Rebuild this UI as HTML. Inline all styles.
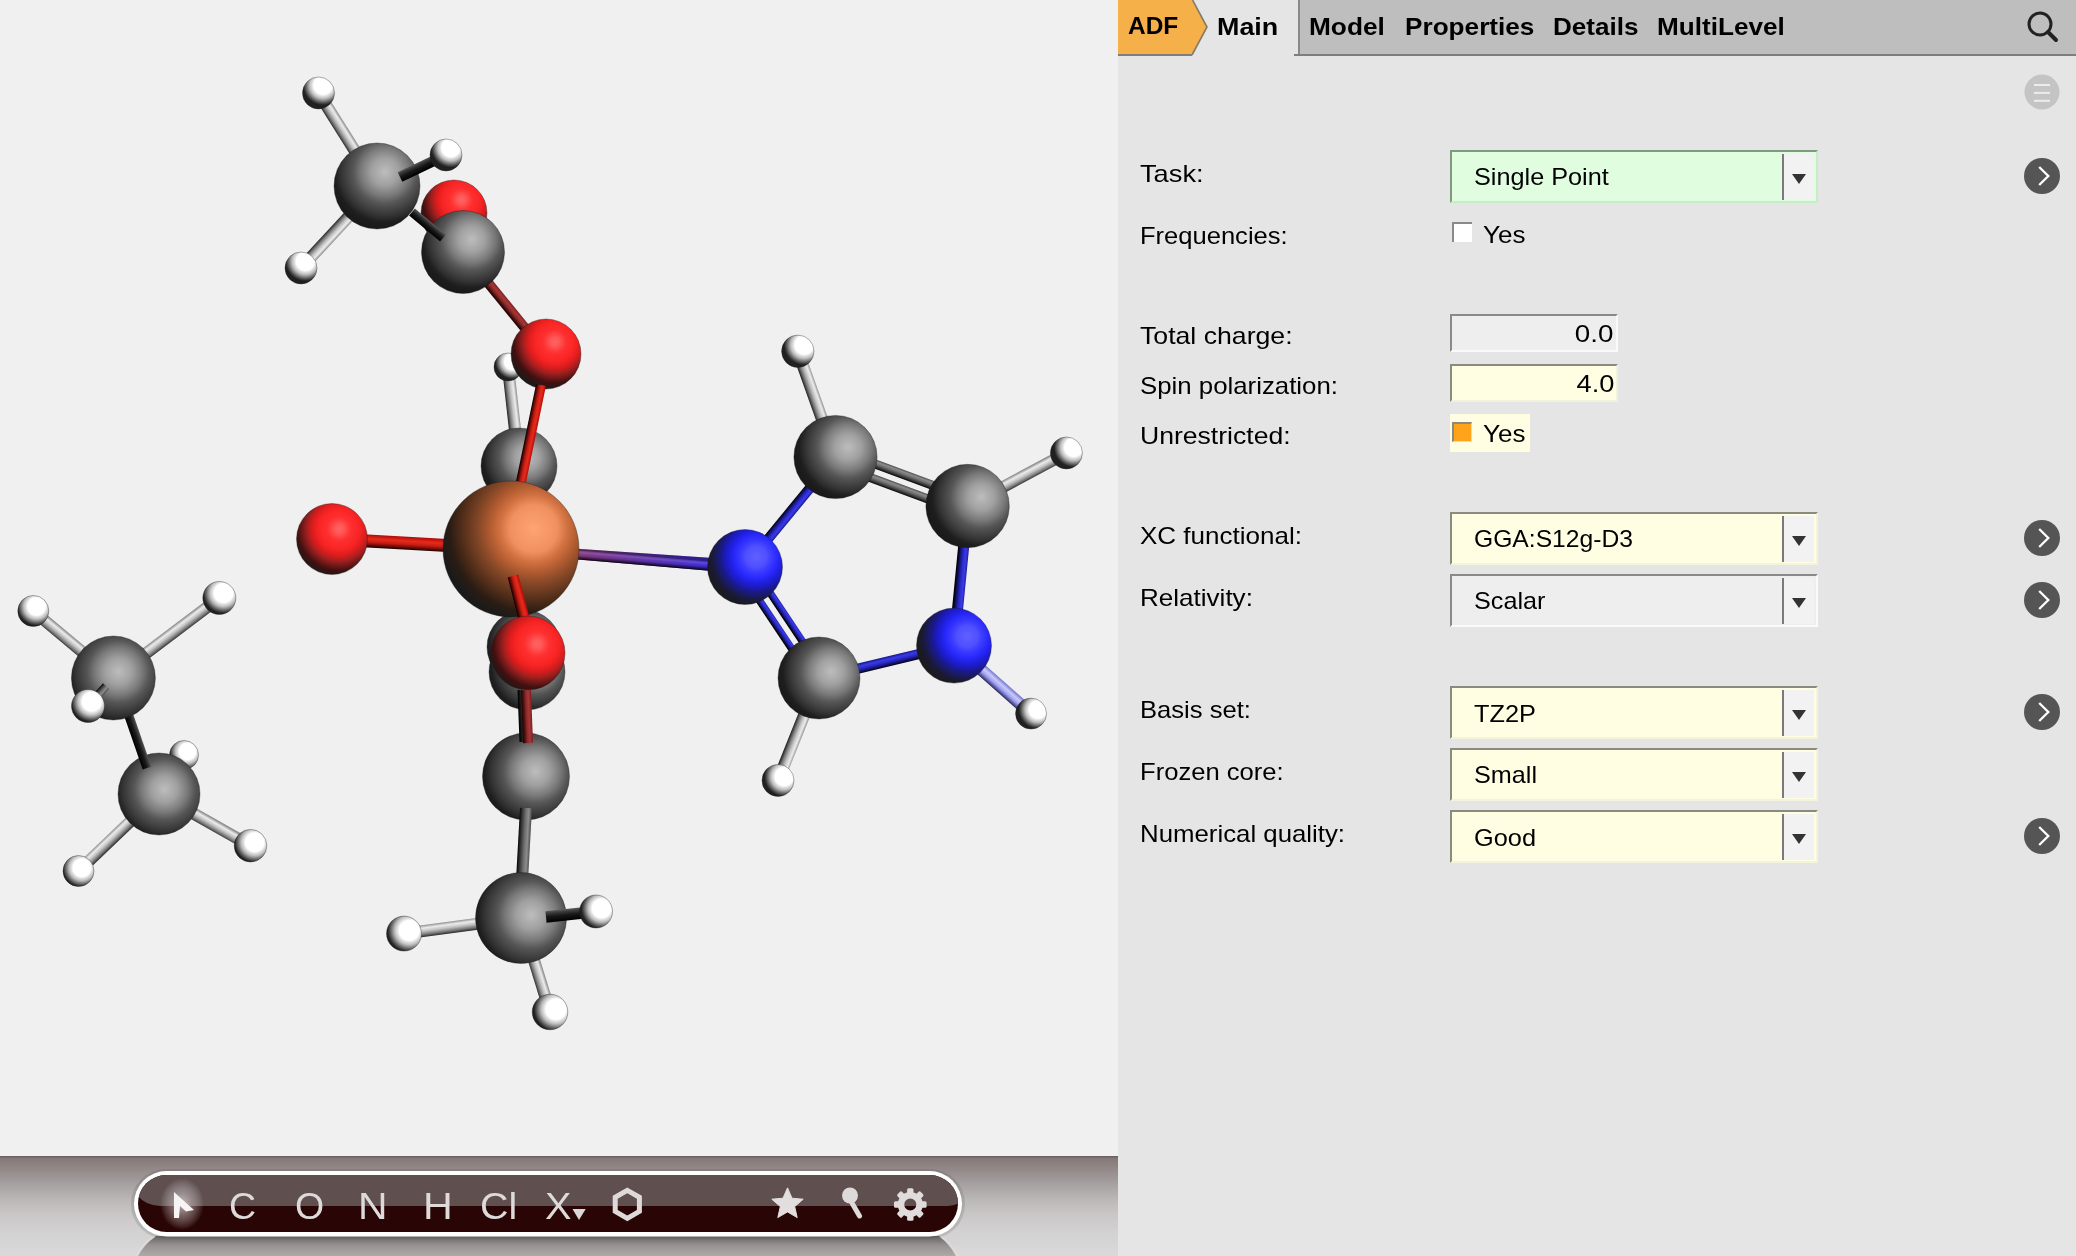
<!DOCTYPE html>
<html><head><meta charset="utf-8">
<style>
*{margin:0;padding:0;box-sizing:border-box}
html,body{width:2076px;height:1256px;overflow:hidden;background:#f0f0f0;font-family:"Liberation Sans",sans-serif}
.tab,.lbl,.lblr,.tbl,.dd div{will-change:transform}
.abs{position:absolute}
#panel{position:absolute;left:1118px;top:0;width:958px;height:1256px;background:#e5e5e5}
#tabbar{position:absolute;left:180px;top:0;width:778px;height:56px;background:#bebebe;border-left:2px solid #8a8a8a;border-bottom:2px solid #7e7e7e}
.tab{position:absolute;font-weight:bold;font-size:24px;line-height:54px;color:#000;white-space:nowrap;transform-origin:0 0}
.lbl{position:absolute;font-size:24px;line-height:28px;color:#000;white-space:nowrap;transform-origin:0 0}
.lblr{position:absolute;font-size:24px;line-height:28px;color:#000;white-space:nowrap;transform-origin:100% 0}
.dd{position:absolute;left:332px;width:368px;height:53px;border-top:2px solid #8a8a7e;border-left:2px solid #8a8a7e;border-right:2px solid #f4f4de;border-bottom:2px solid #f4f4de;background:#fffee3}
.dd .sep{position:absolute;left:330px;top:2px;width:2px;height:46px;background:#7a7a7a}
.dd .ar{position:absolute;left:332px;top:2px;width:30px;height:46px;background:#f2f2f2}
.dd .ar:after{content:"";position:absolute;left:8px;top:20px;border-left:7px solid transparent;border-right:7px solid transparent;border-top:10px solid #333}
.go{position:absolute;left:906px;width:36px;height:36px;border-radius:50%;background:#555}
.go svg{position:absolute;left:0;top:0}
.tbl{position:absolute;top:1185.5px;font-size:37.5px;line-height:40px;color:#dedada;white-space:nowrap;transform-origin:0 0}
</style></head><body>
<svg class="abs" style="left:0;top:0" width="1118" height="1156"><defs><linearGradient id="b1" gradientUnits="userSpaceOnUse" x1="163.2" y1="796.7" x2="154.8" y2="791.3"><stop offset="0" stop-color="#8a8a8a"/><stop offset="0.25" stop-color="#ececec"/><stop offset="0.5" stop-color="#c4c4c4"/><stop offset="0.78" stop-color="#7a7a7a"/><stop offset="1" stop-color="#2a2a2a"/></linearGradient><radialGradient id="s1" cx="0.622" cy="0.376" r="0.62" fx="0.622" fy="0.376"><stop offset="0" stop-color="#ffffff"/><stop offset="0.46" stop-color="#ffffff"/><stop offset="0.55" stop-color="#e0e0e0"/><stop offset="0.66" stop-color="#c0c0c0"/><stop offset="0.76" stop-color="#909090"/><stop offset="0.856" stop-color="#606060"/><stop offset="0.958" stop-color="#303030"/><stop offset="1" stop-color="#202020"/></radialGradient><linearGradient id="b2" gradientUnits="userSpaceOnUse" x1="117.2" y1="673.4" x2="109.6" y2="682.6"><stop offset="0" stop-color="#8a8a8a"/><stop offset="0.25" stop-color="#ececec"/><stop offset="0.5" stop-color="#c4c4c4"/><stop offset="0.78" stop-color="#7a7a7a"/><stop offset="1" stop-color="#2a2a2a"/></linearGradient><linearGradient id="b3" gradientUnits="userSpaceOnUse" x1="109.8" y1="673.2" x2="117.0" y2="682.8"><stop offset="0" stop-color="#8a8a8a"/><stop offset="0.25" stop-color="#ececec"/><stop offset="0.5" stop-color="#c4c4c4"/><stop offset="0.78" stop-color="#7a7a7a"/><stop offset="1" stop-color="#2a2a2a"/></linearGradient><linearGradient id="b4" gradientUnits="userSpaceOnUse" x1="154.9" y1="789.7" x2="163.1" y2="798.3"><stop offset="0" stop-color="#8a8a8a"/><stop offset="0.25" stop-color="#ececec"/><stop offset="0.5" stop-color="#c4c4c4"/><stop offset="0.78" stop-color="#7a7a7a"/><stop offset="1" stop-color="#2a2a2a"/></linearGradient><linearGradient id="b5" gradientUnits="userSpaceOnUse" x1="162.0" y1="788.8" x2="156.0" y2="799.2"><stop offset="0" stop-color="#8a8a8a"/><stop offset="0.25" stop-color="#ececec"/><stop offset="0.5" stop-color="#c4c4c4"/><stop offset="0.78" stop-color="#7a7a7a"/><stop offset="1" stop-color="#2a2a2a"/></linearGradient><radialGradient id="s2" cx="0.604" cy="0.351" r="0.62" fx="0.604" fy="0.351"><stop offset="0" stop-color="#ffffff"/><stop offset="0.46" stop-color="#ffffff"/><stop offset="0.55" stop-color="#e0e0e0"/><stop offset="0.66" stop-color="#c0c0c0"/><stop offset="0.76" stop-color="#909090"/><stop offset="0.856" stop-color="#606060"/><stop offset="0.958" stop-color="#303030"/><stop offset="1" stop-color="#202020"/></radialGradient><radialGradient id="s3" cx="0.626" cy="0.349" r="0.62" fx="0.626" fy="0.349"><stop offset="0" stop-color="#ffffff"/><stop offset="0.46" stop-color="#ffffff"/><stop offset="0.55" stop-color="#e0e0e0"/><stop offset="0.66" stop-color="#c0c0c0"/><stop offset="0.76" stop-color="#909090"/><stop offset="0.856" stop-color="#606060"/><stop offset="0.958" stop-color="#303030"/><stop offset="1" stop-color="#202020"/></radialGradient><radialGradient id="s4" cx="0.609" cy="0.397" r="0.62" fx="0.609" fy="0.397"><stop offset="0" stop-color="#ffffff"/><stop offset="0.46" stop-color="#ffffff"/><stop offset="0.55" stop-color="#e0e0e0"/><stop offset="0.66" stop-color="#c0c0c0"/><stop offset="0.76" stop-color="#909090"/><stop offset="0.856" stop-color="#606060"/><stop offset="0.958" stop-color="#303030"/><stop offset="1" stop-color="#202020"/></radialGradient><radialGradient id="s5" cx="0.630" cy="0.393" r="0.62" fx="0.630" fy="0.393"><stop offset="0" stop-color="#ffffff"/><stop offset="0.46" stop-color="#ffffff"/><stop offset="0.55" stop-color="#e0e0e0"/><stop offset="0.66" stop-color="#c0c0c0"/><stop offset="0.76" stop-color="#909090"/><stop offset="0.856" stop-color="#606060"/><stop offset="0.958" stop-color="#303030"/><stop offset="1" stop-color="#202020"/></radialGradient><radialGradient id="s6" cx="0.567" cy="0.443" r="0.65" fx="0.567" fy="0.443"><stop offset="0" stop-color="#bdbdbd"/><stop offset="0.246" stop-color="#a0a0a0"/><stop offset="0.43" stop-color="#7a7a7a"/><stop offset="0.57" stop-color="#565656"/><stop offset="0.79" stop-color="#333333"/><stop offset="0.9" stop-color="#1e1e1e"/><stop offset="1" stop-color="#1a1a1a"/></radialGradient><linearGradient id="b6" gradientUnits="userSpaceOnUse" x1="133.3" y1="714.5" x2="124.7" y2="717.5"><stop offset="0" stop-color="#5a5a5a"/><stop offset="0.2" stop-color="#3a3a3a"/><stop offset="0.5" stop-color="#181818"/><stop offset="1" stop-color="#000000"/></linearGradient><radialGradient id="s7" cx="0.561" cy="0.423" r="0.65" fx="0.561" fy="0.423"><stop offset="0" stop-color="#bdbdbd"/><stop offset="0.246" stop-color="#a0a0a0"/><stop offset="0.43" stop-color="#7a7a7a"/><stop offset="0.57" stop-color="#565656"/><stop offset="0.79" stop-color="#333333"/><stop offset="0.9" stop-color="#1e1e1e"/><stop offset="1" stop-color="#1a1a1a"/></radialGradient><linearGradient id="b7" gradientUnits="userSpaceOnUse" x1="91.0" y1="708.7" x2="85.0" y2="703.3"><stop offset="0" stop-color="#4a4a4a"/><stop offset="0.25" stop-color="#8c8c8c"/><stop offset="0.5" stop-color="#6e6e6e"/><stop offset="0.78" stop-color="#383838"/><stop offset="1" stop-color="#0a0a0a"/></linearGradient><radialGradient id="s8" cx="0.610" cy="0.368" r="0.62" fx="0.610" fy="0.368"><stop offset="0" stop-color="#ffffff"/><stop offset="0.46" stop-color="#ffffff"/><stop offset="0.55" stop-color="#e0e0e0"/><stop offset="0.66" stop-color="#c0c0c0"/><stop offset="0.76" stop-color="#909090"/><stop offset="0.856" stop-color="#606060"/><stop offset="0.958" stop-color="#303030"/><stop offset="1" stop-color="#202020"/></radialGradient><linearGradient id="b8" gradientUnits="userSpaceOnUse" x1="323.6" y1="89.8" x2="313.4" y2="96.2"><stop offset="0" stop-color="#8a8a8a"/><stop offset="0.25" stop-color="#ececec"/><stop offset="0.5" stop-color="#c4c4c4"/><stop offset="0.78" stop-color="#7a7a7a"/><stop offset="1" stop-color="#2a2a2a"/></linearGradient><linearGradient id="b9" gradientUnits="userSpaceOnUse" x1="305.4" y1="272.1" x2="296.6" y2="263.9"><stop offset="0" stop-color="#8a8a8a"/><stop offset="0.25" stop-color="#ececec"/><stop offset="0.5" stop-color="#c4c4c4"/><stop offset="0.78" stop-color="#7a7a7a"/><stop offset="1" stop-color="#2a2a2a"/></linearGradient><radialGradient id="s9" cx="0.638" cy="0.259" r="0.62" fx="0.638" fy="0.259"><stop offset="0" stop-color="#ffffff"/><stop offset="0.46" stop-color="#ffffff"/><stop offset="0.55" stop-color="#e0e0e0"/><stop offset="0.66" stop-color="#c0c0c0"/><stop offset="0.76" stop-color="#909090"/><stop offset="0.856" stop-color="#606060"/><stop offset="0.958" stop-color="#303030"/><stop offset="1" stop-color="#202020"/></radialGradient><radialGradient id="s10" cx="0.636" cy="0.290" r="0.62" fx="0.636" fy="0.290"><stop offset="0" stop-color="#ffffff"/><stop offset="0.46" stop-color="#ffffff"/><stop offset="0.55" stop-color="#e0e0e0"/><stop offset="0.66" stop-color="#c0c0c0"/><stop offset="0.76" stop-color="#909090"/><stop offset="0.856" stop-color="#606060"/><stop offset="0.958" stop-color="#303030"/><stop offset="1" stop-color="#202020"/></radialGradient><radialGradient id="s11" cx="0.614" cy="0.300" r="0.7" fx="0.614" fy="0.300"><stop offset="0" stop-color="#ff6262"/><stop offset="0.08" stop-color="#ff5a5a"/><stop offset="0.235" stop-color="#ff3030"/><stop offset="0.42" stop-color="#f82424"/><stop offset="0.55" stop-color="#d81c1c"/><stop offset="0.65" stop-color="#a02020"/><stop offset="0.84" stop-color="#401010"/><stop offset="1" stop-color="#1a1a1a"/></radialGradient><radialGradient id="s12" cx="0.593" cy="0.335" r="0.65" fx="0.593" fy="0.335"><stop offset="0" stop-color="#bdbdbd"/><stop offset="0.246" stop-color="#a0a0a0"/><stop offset="0.43" stop-color="#7a7a7a"/><stop offset="0.57" stop-color="#565656"/><stop offset="0.79" stop-color="#333333"/><stop offset="0.9" stop-color="#1e1e1e"/><stop offset="1" stop-color="#1a1a1a"/></radialGradient><linearGradient id="b10" gradientUnits="userSpaceOnUse" x1="397.7" y1="172.3" x2="402.3" y2="181.7"><stop offset="0" stop-color="#5a5a5a"/><stop offset="0.2" stop-color="#3a3a3a"/><stop offset="0.5" stop-color="#181818"/><stop offset="1" stop-color="#000000"/></linearGradient><radialGradient id="s13" cx="0.653" cy="0.270" r="0.62" fx="0.653" fy="0.270"><stop offset="0" stop-color="#ffffff"/><stop offset="0.46" stop-color="#ffffff"/><stop offset="0.55" stop-color="#e0e0e0"/><stop offset="0.66" stop-color="#c0c0c0"/><stop offset="0.76" stop-color="#909090"/><stop offset="0.856" stop-color="#606060"/><stop offset="0.958" stop-color="#303030"/><stop offset="1" stop-color="#202020"/></radialGradient><linearGradient id="b11" gradientUnits="userSpaceOnUse" x1="466.9" y1="248.8" x2="459.1" y2="255.2"><stop offset="0" stop-color="#7a2020"/><stop offset="0.3" stop-color="#a83636"/><stop offset="0.55" stop-color="#8a2a2a"/><stop offset="0.8" stop-color="#4a1010"/><stop offset="1" stop-color="#200000"/></linearGradient><radialGradient id="s14" cx="0.604" cy="0.347" r="0.65" fx="0.604" fy="0.347"><stop offset="0" stop-color="#bdbdbd"/><stop offset="0.246" stop-color="#a0a0a0"/><stop offset="0.43" stop-color="#7a7a7a"/><stop offset="0.57" stop-color="#565656"/><stop offset="0.79" stop-color="#333333"/><stop offset="0.9" stop-color="#1e1e1e"/><stop offset="1" stop-color="#1a1a1a"/></radialGradient><linearGradient id="b12" gradientUnits="userSpaceOnUse" x1="414.9" y1="208.6" x2="409.1" y2="215.4"><stop offset="0" stop-color="#5a5a5a"/><stop offset="0.2" stop-color="#3a3a3a"/><stop offset="0.5" stop-color="#181818"/><stop offset="1" stop-color="#000000"/></linearGradient><linearGradient id="b13" gradientUnits="userSpaceOnUse" x1="514.0" y1="366.3" x2="502.0" y2="367.7"><stop offset="0" stop-color="#8a8a8a"/><stop offset="0.25" stop-color="#ececec"/><stop offset="0.5" stop-color="#c4c4c4"/><stop offset="0.78" stop-color="#7a7a7a"/><stop offset="1" stop-color="#2a2a2a"/></linearGradient><radialGradient id="s15" cx="0.661" cy="0.307" r="0.62" fx="0.661" fy="0.307"><stop offset="0" stop-color="#ffffff"/><stop offset="0.46" stop-color="#ffffff"/><stop offset="0.55" stop-color="#e0e0e0"/><stop offset="0.66" stop-color="#c0c0c0"/><stop offset="0.76" stop-color="#909090"/><stop offset="0.856" stop-color="#606060"/><stop offset="0.958" stop-color="#303030"/><stop offset="1" stop-color="#202020"/></radialGradient><radialGradient id="s16" cx="0.626" cy="0.325" r="0.7" fx="0.626" fy="0.325"><stop offset="0" stop-color="#ff6262"/><stop offset="0.08" stop-color="#ff5a5a"/><stop offset="0.235" stop-color="#ff3030"/><stop offset="0.42" stop-color="#f82424"/><stop offset="0.55" stop-color="#d81c1c"/><stop offset="0.65" stop-color="#a02020"/><stop offset="0.84" stop-color="#401010"/><stop offset="1" stop-color="#1a1a1a"/></radialGradient><radialGradient id="s17" cx="0.610" cy="0.385" r="0.65" fx="0.610" fy="0.385"><stop offset="0" stop-color="#bdbdbd"/><stop offset="0.246" stop-color="#a0a0a0"/><stop offset="0.43" stop-color="#7a7a7a"/><stop offset="0.57" stop-color="#565656"/><stop offset="0.79" stop-color="#333333"/><stop offset="0.9" stop-color="#1e1e1e"/><stop offset="1" stop-color="#1a1a1a"/></radialGradient><linearGradient id="b14" gradientUnits="userSpaceOnUse" x1="545.9" y1="386.0" x2="536.1" y2="384.0"><stop offset="0" stop-color="#b00c0c"/><stop offset="0.3" stop-color="#e82a1a"/><stop offset="0.55" stop-color="#c81e14"/><stop offset="0.8" stop-color="#6a0a06"/><stop offset="1" stop-color="#0a0000"/></linearGradient><radialGradient id="s18" cx="0.611" cy="0.417" r="0.65" fx="0.611" fy="0.417"><stop offset="0" stop-color="#bdbdbd"/><stop offset="0.246" stop-color="#a0a0a0"/><stop offset="0.43" stop-color="#7a7a7a"/><stop offset="0.57" stop-color="#565656"/><stop offset="0.79" stop-color="#333333"/><stop offset="0.9" stop-color="#1e1e1e"/><stop offset="1" stop-color="#1a1a1a"/></radialGradient><radialGradient id="s19" cx="0.611" cy="0.422" r="0.65" fx="0.611" fy="0.422"><stop offset="0" stop-color="#bdbdbd"/><stop offset="0.246" stop-color="#a0a0a0"/><stop offset="0.43" stop-color="#7a7a7a"/><stop offset="0.57" stop-color="#565656"/><stop offset="0.79" stop-color="#333333"/><stop offset="0.9" stop-color="#1e1e1e"/><stop offset="1" stop-color="#1a1a1a"/></radialGradient><linearGradient id="b15" gradientUnits="userSpaceOnUse" x1="332.4" y1="532.5" x2="331.6" y2="545.5"><stop offset="0" stop-color="#b00c0c"/><stop offset="0.3" stop-color="#e82a1a"/><stop offset="0.55" stop-color="#c81e14"/><stop offset="0.8" stop-color="#6a0a06"/><stop offset="1" stop-color="#0a0000"/></linearGradient><radialGradient id="s20" cx="0.600" cy="0.358" r="0.7" fx="0.600" fy="0.358"><stop offset="0" stop-color="#ff6262"/><stop offset="0.08" stop-color="#ff5a5a"/><stop offset="0.235" stop-color="#ff3030"/><stop offset="0.42" stop-color="#f82424"/><stop offset="0.55" stop-color="#d81c1c"/><stop offset="0.65" stop-color="#a02020"/><stop offset="0.84" stop-color="#401010"/><stop offset="1" stop-color="#1a1a1a"/></radialGradient><linearGradient id="b16" gradientUnits="userSpaceOnUse" x1="511.0" y1="549.0" x2="745.0" y2="567.0"><stop offset="0.25" stop-color="#8a3a7c"/><stop offset="0.9" stop-color="#3a2ce8"/></linearGradient><linearGradient id="b17" gradientUnits="userSpaceOnUse" x1="511.4" y1="544.3" x2="510.6" y2="553.7"><stop offset="0" stop-color="#000" stop-opacity="0.35"/><stop offset="0.3" stop-color="#fff" stop-opacity="0.12"/><stop offset="0.55" stop-color="#000" stop-opacity="0"/><stop offset="0.8" stop-color="#000" stop-opacity="0.5"/><stop offset="1" stop-color="#000" stop-opacity="0.92"/></linearGradient><radialGradient id="s21" cx="0.666" cy="0.350" r="0.75" fx="0.666" fy="0.350"><stop offset="0" stop-color="#ffa472"/><stop offset="0.233" stop-color="#f09060"/><stop offset="0.333" stop-color="#d07040"/><stop offset="0.433" stop-color="#b05a30"/><stop offset="0.527" stop-color="#8a4a28"/><stop offset="0.627" stop-color="#6a3a20"/><stop offset="0.727" stop-color="#4a2a18"/><stop offset="0.823" stop-color="#2a1c14"/><stop offset="0.93" stop-color="#1a1a1a"/><stop offset="1" stop-color="#1a1a1a"/></radialGradient><linearGradient id="b18" gradientUnits="userSpaceOnUse" x1="518.3" y1="574.6" x2="507.7" y2="577.4"><stop offset="0" stop-color="#b00c0c"/><stop offset="0.3" stop-color="#e82a1a"/><stop offset="0.55" stop-color="#c81e14"/><stop offset="0.8" stop-color="#6a0a06"/><stop offset="1" stop-color="#0a0000"/></linearGradient><radialGradient id="s22" cx="0.623" cy="0.378" r="0.7" fx="0.623" fy="0.378"><stop offset="0" stop-color="#ff6262"/><stop offset="0.08" stop-color="#ff5a5a"/><stop offset="0.235" stop-color="#ff3030"/><stop offset="0.42" stop-color="#f82424"/><stop offset="0.55" stop-color="#d81c1c"/><stop offset="0.65" stop-color="#a02020"/><stop offset="0.84" stop-color="#401010"/><stop offset="1" stop-color="#1a1a1a"/></radialGradient><radialGradient id="s23" cx="0.611" cy="0.440" r="0.65" fx="0.611" fy="0.440"><stop offset="0" stop-color="#bdbdbd"/><stop offset="0.246" stop-color="#a0a0a0"/><stop offset="0.43" stop-color="#7a7a7a"/><stop offset="0.57" stop-color="#565656"/><stop offset="0.79" stop-color="#333333"/><stop offset="0.9" stop-color="#1e1e1e"/><stop offset="1" stop-color="#1a1a1a"/></radialGradient><linearGradient id="b19" gradientUnits="userSpaceOnUse" x1="522.5" y1="689.9" x2="517.5" y2="690.1"><stop offset="0" stop-color="#5a5a5a"/><stop offset="0.2" stop-color="#3a3a3a"/><stop offset="0.5" stop-color="#181818"/><stop offset="1" stop-color="#000000"/></linearGradient><linearGradient id="b20" gradientUnits="userSpaceOnUse" x1="531.0" y1="689.8" x2="521.0" y2="690.2"><stop offset="0" stop-color="#7a2020"/><stop offset="0.3" stop-color="#a83636"/><stop offset="0.55" stop-color="#8a2a2a"/><stop offset="0.8" stop-color="#4a1010"/><stop offset="1" stop-color="#200000"/></linearGradient><linearGradient id="b21" gradientUnits="userSpaceOnUse" x1="532.0" y1="808.3" x2="520.0" y2="807.7"><stop offset="0" stop-color="#4a4a4a"/><stop offset="0.25" stop-color="#8c8c8c"/><stop offset="0.5" stop-color="#6e6e6e"/><stop offset="0.78" stop-color="#383838"/><stop offset="1" stop-color="#0a0a0a"/></linearGradient><linearGradient id="b22" gradientUnits="userSpaceOnUse" x1="403.2" y1="927.7" x2="404.8" y2="939.5"><stop offset="0" stop-color="#8a8a8a"/><stop offset="0.25" stop-color="#ececec"/><stop offset="0.5" stop-color="#c4c4c4"/><stop offset="0.78" stop-color="#7a7a7a"/><stop offset="1" stop-color="#2a2a2a"/></linearGradient><linearGradient id="b23" gradientUnits="userSpaceOnUse" x1="555.7" y1="1010.2" x2="544.3" y2="1013.8"><stop offset="0" stop-color="#8a8a8a"/><stop offset="0.25" stop-color="#ececec"/><stop offset="0.5" stop-color="#c4c4c4"/><stop offset="0.78" stop-color="#7a7a7a"/><stop offset="1" stop-color="#2a2a2a"/></linearGradient><radialGradient id="s24" cx="0.648" cy="0.408" r="0.62" fx="0.648" fy="0.408"><stop offset="0" stop-color="#ffffff"/><stop offset="0.46" stop-color="#ffffff"/><stop offset="0.55" stop-color="#e0e0e0"/><stop offset="0.66" stop-color="#c0c0c0"/><stop offset="0.76" stop-color="#909090"/><stop offset="0.856" stop-color="#606060"/><stop offset="0.958" stop-color="#303030"/><stop offset="1" stop-color="#202020"/></radialGradient><radialGradient id="s25" cx="0.666" cy="0.422" r="0.62" fx="0.666" fy="0.422"><stop offset="0" stop-color="#ffffff"/><stop offset="0.46" stop-color="#ffffff"/><stop offset="0.55" stop-color="#e0e0e0"/><stop offset="0.66" stop-color="#c0c0c0"/><stop offset="0.76" stop-color="#909090"/><stop offset="0.856" stop-color="#606060"/><stop offset="0.958" stop-color="#303030"/><stop offset="1" stop-color="#202020"/></radialGradient><radialGradient id="s26" cx="0.611" cy="0.465" r="0.65" fx="0.611" fy="0.465"><stop offset="0" stop-color="#bdbdbd"/><stop offset="0.246" stop-color="#a0a0a0"/><stop offset="0.43" stop-color="#7a7a7a"/><stop offset="0.57" stop-color="#565656"/><stop offset="0.79" stop-color="#333333"/><stop offset="0.9" stop-color="#1e1e1e"/><stop offset="1" stop-color="#1a1a1a"/></radialGradient><linearGradient id="b24" gradientUnits="userSpaceOnUse" x1="545.4" y1="911.3" x2="546.6" y2="922.7"><stop offset="0" stop-color="#5a5a5a"/><stop offset="0.2" stop-color="#3a3a3a"/><stop offset="0.5" stop-color="#181818"/><stop offset="1" stop-color="#000000"/></linearGradient><radialGradient id="s27" cx="0.672" cy="0.404" r="0.62" fx="0.672" fy="0.404"><stop offset="0" stop-color="#ffffff"/><stop offset="0.46" stop-color="#ffffff"/><stop offset="0.55" stop-color="#e0e0e0"/><stop offset="0.66" stop-color="#c0c0c0"/><stop offset="0.76" stop-color="#909090"/><stop offset="0.856" stop-color="#606060"/><stop offset="0.958" stop-color="#303030"/><stop offset="1" stop-color="#202020"/></radialGradient><linearGradient id="b25" gradientUnits="userSpaceOnUse" x1="841.2" y1="455.0" x2="829.8" y2="459.0"><stop offset="0" stop-color="#8a8a8a"/><stop offset="0.25" stop-color="#ececec"/><stop offset="0.5" stop-color="#c4c4c4"/><stop offset="0.78" stop-color="#7a7a7a"/><stop offset="1" stop-color="#2a2a2a"/></linearGradient><linearGradient id="b26" gradientUnits="userSpaceOnUse" x1="964.8" y1="500.7" x2="970.4" y2="511.3"><stop offset="0" stop-color="#8a8a8a"/><stop offset="0.25" stop-color="#ececec"/><stop offset="0.5" stop-color="#c4c4c4"/><stop offset="0.78" stop-color="#7a7a7a"/><stop offset="1" stop-color="#2a2a2a"/></linearGradient><linearGradient id="b27" gradientUnits="userSpaceOnUse" x1="824.6" y1="680.2" x2="813.4" y2="675.8"><stop offset="0" stop-color="#8a8a8a"/><stop offset="0.25" stop-color="#ececec"/><stop offset="0.5" stop-color="#c4c4c4"/><stop offset="0.78" stop-color="#7a7a7a"/><stop offset="1" stop-color="#2a2a2a"/></linearGradient><linearGradient id="b28" gradientUnits="userSpaceOnUse" x1="958.0" y1="641.1" x2="950.0" y2="650.1"><stop offset="0" stop-color="#7a7ad0"/><stop offset="0.3" stop-color="#c8c8ff"/><stop offset="0.6" stop-color="#a0a0e8"/><stop offset="0.85" stop-color="#5050a0"/><stop offset="1" stop-color="#202040"/></linearGradient><radialGradient id="s28" cx="0.696" cy="0.305" r="0.62" fx="0.696" fy="0.305"><stop offset="0" stop-color="#ffffff"/><stop offset="0.46" stop-color="#ffffff"/><stop offset="0.55" stop-color="#e0e0e0"/><stop offset="0.66" stop-color="#c0c0c0"/><stop offset="0.76" stop-color="#909090"/><stop offset="0.856" stop-color="#606060"/><stop offset="0.958" stop-color="#303030"/><stop offset="1" stop-color="#202020"/></radialGradient><radialGradient id="s29" cx="0.728" cy="0.323" r="0.62" fx="0.728" fy="0.323"><stop offset="0" stop-color="#ffffff"/><stop offset="0.46" stop-color="#ffffff"/><stop offset="0.55" stop-color="#e0e0e0"/><stop offset="0.66" stop-color="#c0c0c0"/><stop offset="0.76" stop-color="#909090"/><stop offset="0.856" stop-color="#606060"/><stop offset="0.958" stop-color="#303030"/><stop offset="1" stop-color="#202020"/></radialGradient><radialGradient id="s30" cx="0.694" cy="0.381" r="0.62" fx="0.694" fy="0.381"><stop offset="0" stop-color="#ffffff"/><stop offset="0.46" stop-color="#ffffff"/><stop offset="0.55" stop-color="#e0e0e0"/><stop offset="0.66" stop-color="#c0c0c0"/><stop offset="0.76" stop-color="#909090"/><stop offset="0.856" stop-color="#606060"/><stop offset="0.958" stop-color="#303030"/><stop offset="1" stop-color="#202020"/></radialGradient><radialGradient id="s31" cx="0.724" cy="0.369" r="0.62" fx="0.724" fy="0.369"><stop offset="0" stop-color="#ffffff"/><stop offset="0.46" stop-color="#ffffff"/><stop offset="0.55" stop-color="#e0e0e0"/><stop offset="0.66" stop-color="#c0c0c0"/><stop offset="0.76" stop-color="#909090"/><stop offset="0.856" stop-color="#606060"/><stop offset="0.958" stop-color="#303030"/><stop offset="1" stop-color="#202020"/></radialGradient><linearGradient id="b29" gradientUnits="userSpaceOnUse" x1="748.9" y1="570.2" x2="741.1" y2="563.8"><stop offset="0" stop-color="#1a1a90"/><stop offset="0.25" stop-color="#3a3ae8"/><stop offset="0.5" stop-color="#2a2ac8"/><stop offset="0.8" stop-color="#101060"/><stop offset="1" stop-color="#000000"/></linearGradient><linearGradient id="b30" gradientUnits="userSpaceOnUse" x1="839.6" y1="446.0" x2="836.5" y2="454.4"><stop offset="0" stop-color="#4a4a4a"/><stop offset="0.25" stop-color="#8c8c8c"/><stop offset="0.5" stop-color="#6e6e6e"/><stop offset="0.78" stop-color="#383838"/><stop offset="1" stop-color="#0a0a0a"/></linearGradient><linearGradient id="b31" gradientUnits="userSpaceOnUse" x1="834.5" y1="459.6" x2="831.4" y2="468.0"><stop offset="0" stop-color="#4a4a4a"/><stop offset="0.25" stop-color="#8c8c8c"/><stop offset="0.5" stop-color="#6e6e6e"/><stop offset="0.78" stop-color="#383838"/><stop offset="1" stop-color="#0a0a0a"/></linearGradient><linearGradient id="b32" gradientUnits="userSpaceOnUse" x1="973.1" y1="506.5" x2="962.1" y2="505.5"><stop offset="0" stop-color="#1a1a90"/><stop offset="0.25" stop-color="#3a3ae8"/><stop offset="0.5" stop-color="#2a2ac8"/><stop offset="0.8" stop-color="#101060"/><stop offset="1" stop-color="#000000"/></linearGradient><linearGradient id="b33" gradientUnits="userSpaceOnUse" x1="952.8" y1="640.7" x2="955.2" y2="650.5"><stop offset="0" stop-color="#1a1a90"/><stop offset="0.25" stop-color="#3a3ae8"/><stop offset="0.5" stop-color="#2a2ac8"/><stop offset="0.8" stop-color="#101060"/><stop offset="1" stop-color="#000000"/></linearGradient><linearGradient id="b34" gradientUnits="userSpaceOnUse" x1="753.5" y1="561.3" x2="747.3" y2="565.5"><stop offset="0" stop-color="#1a1a90"/><stop offset="0.25" stop-color="#3a3ae8"/><stop offset="0.5" stop-color="#2a2ac8"/><stop offset="0.8" stop-color="#101060"/><stop offset="1" stop-color="#000000"/></linearGradient><linearGradient id="b35" gradientUnits="userSpaceOnUse" x1="742.7" y1="568.5" x2="736.5" y2="572.7"><stop offset="0" stop-color="#1a1a90"/><stop offset="0.25" stop-color="#3a3ae8"/><stop offset="0.5" stop-color="#2a2ac8"/><stop offset="0.8" stop-color="#101060"/><stop offset="1" stop-color="#000000"/></linearGradient><radialGradient id="s32" cx="0.649" cy="0.383" r="0.65" fx="0.649" fy="0.383"><stop offset="0" stop-color="#bdbdbd"/><stop offset="0.246" stop-color="#a0a0a0"/><stop offset="0.43" stop-color="#7a7a7a"/><stop offset="0.57" stop-color="#565656"/><stop offset="0.79" stop-color="#333333"/><stop offset="0.9" stop-color="#1e1e1e"/><stop offset="1" stop-color="#1a1a1a"/></radialGradient><radialGradient id="s33" cx="0.664" cy="0.392" r="0.65" fx="0.664" fy="0.392"><stop offset="0" stop-color="#bdbdbd"/><stop offset="0.246" stop-color="#a0a0a0"/><stop offset="0.43" stop-color="#7a7a7a"/><stop offset="0.57" stop-color="#565656"/><stop offset="0.79" stop-color="#333333"/><stop offset="0.9" stop-color="#1e1e1e"/><stop offset="1" stop-color="#1a1a1a"/></radialGradient><radialGradient id="s34" cx="0.675" cy="0.377" r="0.7" fx="0.675" fy="0.377"><stop offset="0" stop-color="#6060ff"/><stop offset="0.2" stop-color="#5050ff"/><stop offset="0.29" stop-color="#3c3cff"/><stop offset="0.4" stop-color="#2a2aff"/><stop offset="0.5" stop-color="#2020e0"/><stop offset="0.57" stop-color="#1c1cc8"/><stop offset="0.66" stop-color="#1a1a90"/><stop offset="0.86" stop-color="#1a1a30"/><stop offset="1" stop-color="#1a1a1a"/></radialGradient><radialGradient id="s35" cx="0.647" cy="0.423" r="0.65" fx="0.647" fy="0.423"><stop offset="0" stop-color="#bdbdbd"/><stop offset="0.246" stop-color="#a0a0a0"/><stop offset="0.43" stop-color="#7a7a7a"/><stop offset="0.57" stop-color="#565656"/><stop offset="0.79" stop-color="#333333"/><stop offset="0.9" stop-color="#1e1e1e"/><stop offset="1" stop-color="#1a1a1a"/></radialGradient><radialGradient id="s36" cx="0.650" cy="0.363" r="0.7" fx="0.650" fy="0.363"><stop offset="0" stop-color="#6060ff"/><stop offset="0.2" stop-color="#5050ff"/><stop offset="0.29" stop-color="#3c3cff"/><stop offset="0.4" stop-color="#2a2aff"/><stop offset="0.5" stop-color="#2020e0"/><stop offset="0.57" stop-color="#1c1cc8"/><stop offset="0.66" stop-color="#1a1a90"/><stop offset="0.86" stop-color="#1a1a30"/><stop offset="1" stop-color="#1a1a1a"/></radialGradient></defs><polygon points="163.2,796.7 188.2,757.7 179.8,752.3 154.8,791.3" fill="url(#b1)"/><circle cx="184" cy="755" r="14.5" fill="url(#s1)" stroke="#1a1a1a" stroke-opacity="0.45" stroke-width="0.8"/><polygon points="117.2,673.4 37.1,606.4 29.5,615.6 109.6,682.6" fill="url(#b2)"/><polygon points="109.8,673.2 215.7,593.2 222.9,602.8 117.0,682.8" fill="url(#b3)"/><polygon points="154.9,789.7 74.4,866.7 82.6,875.3 163.1,798.3" fill="url(#b4)"/><polygon points="162.0,788.8 253.5,840.5 247.5,850.9 156.0,799.2" fill="url(#b5)"/><circle cx="33.3" cy="611" r="15.5" fill="url(#s2)" stroke="#1a1a1a" stroke-opacity="0.45" stroke-width="0.8"/><circle cx="219.3" cy="598" r="16.5" fill="url(#s3)" stroke="#1a1a1a" stroke-opacity="0.45" stroke-width="0.8"/><circle cx="78.5" cy="871" r="15.5" fill="url(#s4)" stroke="#1a1a1a" stroke-opacity="0.45" stroke-width="0.8"/><circle cx="250.5" cy="845.7" r="16.3" fill="url(#s5)" stroke="#1a1a1a" stroke-opacity="0.45" stroke-width="0.8"/><circle cx="159" cy="794" r="41" fill="url(#s6)" stroke="#1a1a1a" stroke-opacity="0.45" stroke-width="0.8"/><polygon points="133.3,714.5 151.3,766.5 142.7,769.5 124.7,717.5" fill="url(#b6)"/><circle cx="113.4" cy="678" r="42" fill="url(#s7)" stroke="#1a1a1a" stroke-opacity="0.45" stroke-width="0.8"/><polygon points="91.0,708.7 109.0,688.7 103.0,683.3 85.0,703.3" fill="url(#b7)"/><circle cx="88" cy="706" r="16.5" fill="url(#s8)" stroke="#1a1a1a" stroke-opacity="0.45" stroke-width="0.8"/><polygon points="323.6,89.8 382.1,182.8 371.9,189.2 313.4,96.2" fill="url(#b8)"/><polygon points="305.4,272.1 381.4,190.1 372.6,181.9 296.6,263.9" fill="url(#b9)"/><circle cx="318.5" cy="93" r="16" fill="url(#s9)" stroke="#1a1a1a" stroke-opacity="0.45" stroke-width="0.8"/><circle cx="301" cy="268" r="16" fill="url(#s10)" stroke="#1a1a1a" stroke-opacity="0.45" stroke-width="0.8"/><circle cx="454" cy="213" r="33" fill="url(#s11)" stroke="#1a1a1a" stroke-opacity="0.45" stroke-width="0.8"/><circle cx="377" cy="186" r="43" fill="url(#s12)" stroke="#1a1a1a" stroke-opacity="0.45" stroke-width="0.8"/><polygon points="397.7,172.3 443.7,150.3 448.3,159.7 402.3,181.7" fill="url(#b10)"/><circle cx="446" cy="155" r="16" fill="url(#s13)" stroke="#1a1a1a" stroke-opacity="0.45" stroke-width="0.8"/><polygon points="466.9,248.8 549.9,350.8 542.1,357.2 459.1,255.2" fill="url(#b11)"/><circle cx="463" cy="252" r="41.5" fill="url(#s14)" stroke="#1a1a1a" stroke-opacity="0.45" stroke-width="0.8"/><polygon points="414.9,208.6 445.9,234.6 440.1,241.4 409.1,215.4" fill="url(#b12)"/><polygon points="514.0,366.3 525.0,465.3 513.0,466.7 502.0,367.7" fill="url(#b13)"/><circle cx="508" cy="367" r="14" fill="url(#s15)" stroke="#1a1a1a" stroke-opacity="0.45" stroke-width="0.8"/><circle cx="546" cy="354" r="35" fill="url(#s16)" stroke="#1a1a1a" stroke-opacity="0.45" stroke-width="0.8"/><circle cx="519" cy="466" r="38" fill="url(#s17)" stroke="#1a1a1a" stroke-opacity="0.45" stroke-width="0.8"/><polygon points="545.9,386.0 525.9,483.0 516.1,481.0 536.1,384.0" fill="url(#b14)"/><circle cx="524" cy="647" r="37" fill="url(#s18)" stroke="#1a1a1a" stroke-opacity="0.45" stroke-width="0.8"/><circle cx="527" cy="672" r="38" fill="url(#s19)" stroke="#1a1a1a" stroke-opacity="0.45" stroke-width="0.8"/><polygon points="332.4,532.5 511.4,542.5 510.6,555.5 331.6,545.5" fill="url(#b15)"/><circle cx="332" cy="539" r="35.5" fill="url(#s20)" stroke="#1a1a1a" stroke-opacity="0.45" stroke-width="0.8"/><polygon points="511.4,544.3 745.5,560.3 744.5,573.7 510.6,553.7" fill="url(#b16)"/><polygon points="511.4,544.3 745.5,560.3 744.5,573.7 510.6,553.7" fill="url(#b17)"/><circle cx="511" cy="549" r="68" fill="url(#s21)" stroke="#1a1a1a" stroke-opacity="0.45" stroke-width="0.8"/><polygon points="518.3,574.6 530.3,620.6 519.7,623.4 507.7,577.4" fill="url(#b18)"/><circle cx="528" cy="653" r="37" fill="url(#s22)" stroke="#1a1a1a" stroke-opacity="0.45" stroke-width="0.8"/><circle cx="526" cy="776.5" r="43.5" fill="url(#s23)" stroke="#1a1a1a" stroke-opacity="0.45" stroke-width="0.8"/><polygon points="522.5,689.9 524.5,741.9 519.5,742.1 517.5,690.1" fill="url(#b19)"/><polygon points="531.0,689.8 533.0,742.8 523.0,743.2 521.0,690.2" fill="url(#b20)"/><polygon points="532.0,808.3 528.0,880.3 516.0,879.7 520.0,807.7" fill="url(#b21)"/><polygon points="403.2,927.7 520.2,912.1 521.8,923.9 404.8,939.5" fill="url(#b22)"/><polygon points="555.7,1010.2 526.7,916.2 515.3,919.8 544.3,1013.8" fill="url(#b23)"/><circle cx="404" cy="933.6" r="17.5" fill="url(#s24)" stroke="#1a1a1a" stroke-opacity="0.45" stroke-width="0.8"/><circle cx="550" cy="1012" r="17.8" fill="url(#s25)" stroke="#1a1a1a" stroke-opacity="0.45" stroke-width="0.8"/><circle cx="521" cy="918" r="45.5" fill="url(#s26)" stroke="#1a1a1a" stroke-opacity="0.45" stroke-width="0.8"/><polygon points="545.4,911.3 595.4,905.8 596.6,917.2 546.6,922.7" fill="url(#b24)"/><circle cx="596" cy="911.5" r="16.5" fill="url(#s27)" stroke="#1a1a1a" stroke-opacity="0.45" stroke-width="0.8"/><polygon points="841.2,455.0 803.5,349.3 792.1,353.3 829.8,459.0" fill="url(#b25)"/><polygon points="964.8,500.7 1063.6,447.7 1069.2,458.3 970.4,511.3" fill="url(#b26)"/><polygon points="824.6,680.2 783.6,782.6 772.4,778.2 813.4,675.8" fill="url(#b27)"/><polygon points="958.0,641.1 1035.0,709.1 1027.0,718.1 950.0,650.1" fill="url(#b28)"/><circle cx="797.8" cy="351.3" r="16.2" fill="url(#s28)" stroke="#1a1a1a" stroke-opacity="0.45" stroke-width="0.8"/><circle cx="1066.4" cy="453" r="16" fill="url(#s29)" stroke="#1a1a1a" stroke-opacity="0.45" stroke-width="0.8"/><circle cx="778" cy="780.4" r="16" fill="url(#s30)" stroke="#1a1a1a" stroke-opacity="0.45" stroke-width="0.8"/><circle cx="1031" cy="713.6" r="15.5" fill="url(#s31)" stroke="#1a1a1a" stroke-opacity="0.45" stroke-width="0.8"/><polygon points="748.9,570.2 839.4,460.2 831.6,453.8 741.1,563.8" fill="url(#b29)"/><polygon points="839.6,446.0 971.7,495.0 968.6,503.4 836.5,454.4" fill="url(#b30)"/><polygon points="834.5,459.6 966.6,508.6 963.5,517.0 831.4,468.0" fill="url(#b31)"/><polygon points="973.1,506.5 959.5,646.1 948.5,645.1 962.1,505.5" fill="url(#b32)"/><polygon points="952.8,640.7 817.8,673.1 820.2,682.9 955.2,650.5" fill="url(#b33)"/><polygon points="753.5,561.3 827.5,672.3 821.3,676.5 747.3,565.5" fill="url(#b34)"/><polygon points="742.7,568.5 816.7,679.5 810.5,683.7 736.5,572.7" fill="url(#b35)"/><circle cx="835.5" cy="457" r="41.6" fill="url(#s32)" stroke="#1a1a1a" stroke-opacity="0.45" stroke-width="0.8"/><circle cx="967.6" cy="506" r="41.7" fill="url(#s33)" stroke="#1a1a1a" stroke-opacity="0.45" stroke-width="0.8"/><circle cx="954" cy="645.6" r="37.5" fill="url(#s34)" stroke="#1a1a1a" stroke-opacity="0.45" stroke-width="0.8"/><circle cx="819" cy="678" r="41" fill="url(#s35)" stroke="#1a1a1a" stroke-opacity="0.45" stroke-width="0.8"/><circle cx="745" cy="567" r="37.5" fill="url(#s36)" stroke="#1a1a1a" stroke-opacity="0.45" stroke-width="0.8"/></svg>
<svg class="abs" style="left:0;top:1156px" width="1118" height="100" viewBox="0 1156 1118 100">
<defs>
<linearGradient id="tbg" x1="0" y1="0" x2="0" y2="1">
<stop offset="0" stop-color="#7f7272"/><stop offset="0.02" stop-color="#857878"/><stop offset="0.14" stop-color="#948a8a"/><stop offset="0.29" stop-color="#a8a2a2"/><stop offset="0.44" stop-color="#bcb8b8"/><stop offset="0.59" stop-color="#c9c7c7"/><stop offset="0.74" stop-color="#d2d0d0"/><stop offset="1" stop-color="#dadada"/>
</linearGradient>
<linearGradient id="refl" x1="0" y1="0" x2="0" y2="1">
<stop offset="0" stop-color="#686464"/><stop offset="0.2" stop-color="#7a7676"/><stop offset="0.45" stop-color="#959191"/><stop offset="1" stop-color="#aeaaaa"/>
</linearGradient>
<clipPath id="pillc"><rect x="138" y="1175" width="820" height="57" rx="28.5"/></clipPath>
<radialGradient id="glow" cx="0.5" cy="0.5" r="0.5"><stop offset="0" stop-color="#e8e0e0" stop-opacity="0.75"/><stop offset="0.45" stop-color="#d8d0d0" stop-opacity="0.45"/><stop offset="1" stop-color="#ffffff" stop-opacity="0"/></radialGradient>
<radialGradient id="pshad" cx="0.5" cy="0.5" r="0.5"><stop offset="0.85" stop-color="#505050" stop-opacity="0.35"/><stop offset="1" stop-color="#505050" stop-opacity="0"/></radialGradient>
</defs>
<rect x="0" y="1156" width="1118" height="100" fill="url(#tbg)"/>
<rect x="0" y="1156" width="1118" height="1.5" fill="#6e6262"/>
<path d="M155,1236 Q143,1244 137,1256 L957,1256 Q951,1244 940,1236 Z" fill="url(#refl)"/>
<path d="M155,1236 Q143,1244 137,1256" fill="none" stroke="#e4e2e2" stroke-width="2" opacity="0.8"/>
<path d="M940,1236 Q951,1244 957,1256" fill="none" stroke="#e4e2e2" stroke-width="2" opacity="0.8"/>
<rect x="131" y="1169" width="834" height="70" rx="35" fill="#505050" opacity="0.18"/>
<rect x="134" y="1171" width="828" height="65.5" rx="32.75" fill="#ffffff"/>
<g clip-path="url(#pillc)">
<rect x="130" y="1170" width="840" height="70" fill="#2a0505"/>
<path d="M130,1170 L970,1170 L970,1195 Q962,1205 948,1206 L160,1206 Q145,1205 138,1196 L130,1190 Z" fill="#5f4f4f"/>
</g>
<ellipse cx="182" cy="1204" rx="22" ry="26" fill="url(#glow)"/>
<polygon points="174,1192 194,1210 186,1211.5 180,1206 179,1218 174,1218" fill="#f6f4f4"/>
<polygon points="572.5,1209 585.7,1209 579,1220" fill="#dcd8d8"/>
<polygon points="627.3,1190.3 639.4,1197.3 639.4,1211.3 627.3,1218.3 615.2,1211.3 615.2,1197.3" fill="none" stroke="#dedada" stroke-width="5"/>
<polygon points="787.5,1187.8 792.0,1198.2 803.2,1199.2 794.7,1206.6 797.2,1217.6 787.5,1211.9 777.8,1217.6 780.3,1206.6 771.8,1199.2 783.0,1198.2" fill="#e2dede" stroke="#e2dede" stroke-width="1" stroke-linejoin="round"/>
<circle cx="850" cy="1195.5" r="8" fill="#dedada"/><line x1="852" y1="1203" x2="859.5" y2="1216" stroke="#dedada" stroke-width="5" stroke-linecap="round"/>
<g transform="translate(910.3,1204.5)"><circle r="9.3" fill="none" stroke="#e0dcdc" stroke-width="6.5"/>
<g fill="#e0dcdc">
<rect x="-3.2" y="-16.3" width="6.4" height="6" rx="1.5"/><rect x="-3.2" y="10.3" width="6.4" height="6" rx="1.5"/><rect x="-16.3" y="-3.2" width="6" height="6.4" rx="1.5"/><rect x="10.3" y="-3.2" width="6" height="6.4" rx="1.5"/>
<g transform="rotate(45)"><rect x="-3.2" y="-16.3" width="6.4" height="6" rx="1.5"/><rect x="-3.2" y="10.3" width="6.4" height="6" rx="1.5"/><rect x="-16.3" y="-3.2" width="6" height="6.4" rx="1.5"/><rect x="10.3" y="-3.2" width="6" height="6.4" rx="1.5"/></g>
</g></g>
</svg>
<div class="tbl" style="left:229.4px;transform:scaleX(1.0)">C</div><div class="tbl" style="left:294.6px;transform:scaleX(1.0)">O</div><div class="tbl" style="left:358.1px;transform:scaleX(1.09)">N</div><div class="tbl" style="left:422.7px;transform:scaleX(1.1)">H</div><div class="tbl" style="left:479.8px;transform:scaleX(1.05)">Cl</div><div class="tbl" style="left:544.7px;transform:scaleX(1.06)">X</div>

<div id="panel">
<svg class="abs" style="left:0;top:0" width="100" height="58">
<polygon points="0,0 74,0 89,27 74,54 0,54" fill="#f5b04a"/>
<polyline points="74,-1 89,27 74,55" fill="none" stroke="#857a66" stroke-width="1.6"/>
<rect x="0" y="54" width="74" height="2" fill="#7e7e7e"/></svg><div id="tabbar"></div><div class="abs" style="left:176px;top:54px;width:8px;height:2px;background:#7e7e7e"></div><div class="tab" style="left:10px;top:-1px;transform:scaleX(1.0200);">ADF</div><div class="tab" style="left:99.3px;top:0px;transform:scaleX(1.1200);">Main</div><div class="tab" style="left:191.2px;top:0px;transform:scaleX(1.0940);">Model</div><div class="tab" style="left:287px;top:0px;transform:scaleX(1.0900);">Properties</div><div class="tab" style="left:435.2px;top:0px;transform:scaleX(1.0870);">Details</div><div class="tab" style="left:539.2px;top:0px;transform:scaleX(1.0890);">MultiLevel</div><svg class="abs" style="left:906px;top:74px" width="36" height="36"><circle cx="18" cy="18" r="17.5" fill="#c4c4c4"/><rect x="10" y="10" width="16" height="2" fill="#ececec"/><rect x="10" y="17.9" width="16" height="2" fill="#ececec"/><rect x="10" y="25.8" width="16" height="2" fill="#ececec"/></svg><svg class="abs" style="left:906px;top:8px" width="40" height="40"><circle cx="16" cy="16" r="11" fill="none" stroke="#222" stroke-width="3"/><line x1="24" y1="24" x2="32" y2="32" stroke="#222" stroke-width="4" stroke-linecap="round"/></svg><div class="lbl" style="left:22px;top:160px;transform:scaleX(1.1350);">Task:</div><div class="lbl" style="left:22px;top:222px;transform:scaleX(1.0640);">Frequencies:</div><div class="lbl" style="left:22px;top:322px;transform:scaleX(1.1100);">Total charge:</div><div class="lbl" style="left:22px;top:372px;transform:scaleX(1.0750);">Spin polarization:</div><div class="lbl" style="left:22px;top:422px;transform:scaleX(1.1070);">Unrestricted:</div><div class="lbl" style="left:22px;top:522px;transform:scaleX(1.0840);">XC functional:</div><div class="lbl" style="left:22px;top:584px;transform:scaleX(1.0850);">Relativity:</div><div class="lbl" style="left:22px;top:696px;transform:scaleX(1.0660);">Basis set:</div><div class="lbl" style="left:22px;top:758px;transform:scaleX(1.0660);">Frozen core:</div><div class="lbl" style="left:22px;top:820px;transform:scaleX(1.0750);">Numerical quality:</div><div class="dd" style="top:150px;background:#e0fde0;border-top-color:#7f9a7f;border-left-color:#7f9a7f;border-right-color:#c8ecc8;border-bottom-color:#c8ecc8"><div style="position:absolute;left:22px;top:0px;font-size:24px;line-height:49px;white-space:nowrap;transform:scaleX(1.052);transform-origin:0 0;">Single Point</div><div class="sep"></div><div class="ar"></div></div><div class="go" style="top:158px"><svg width="36" height="36"><polyline points="15.2,9 24.3,18 15.2,27" fill="none" stroke="#fff" stroke-width="2.3"/></svg></div><div class="abs" style="left:334px;top:222px;width:20px;height:20px;background:#fff;border-top:2px solid #8a8a8a;border-left:2px solid #8a8a8a"></div><div class="lbl" style="left:365px;top:220.5px;transform:scaleX(1.0830);">Yes</div><div class="abs" style="left:332px;top:314px;width:168px;height:38px;background:#eeeeee;border-top:2px solid #8a8a8a;border-left:2px solid #8a8a8a;border-right:2px solid #fafafa;border-bottom:2px solid #fafafa"></div><div class="lblr" style="right:462.5px;top:320px;transform:scaleX(1.157)">0.0</div><div class="abs" style="left:332px;top:364px;width:168px;height:38px;background:#fffee3;border-top:2px solid #8a8a7e;border-left:2px solid #8a8a7e;border-right:2px solid #f2f2dc;border-bottom:2px solid #f2f2dc"></div><div class="lblr" style="right:462px;top:370px;transform:scaleX(1.135)">4.0</div><div class="abs" style="left:332px;top:414px;width:80px;height:38px;background:#fffee3"></div><div class="abs" style="left:334px;top:422px;width:20px;height:20px;background:#ffa31a;border-top:2px solid #8a8a7e;border-left:2px solid #8a8a7e;border-right:1px solid #e0e0c8;border-bottom:1px solid #e0e0c8"></div><div class="lbl" style="left:365px;top:419.5px;transform:scaleX(1.0830);">Yes</div><div class="dd" style="top:512px;"><div style="position:absolute;left:22px;top:0px;font-size:24px;line-height:49px;white-space:nowrap;transform:scaleX(1.027);transform-origin:0 0;">GGA:S12g-D3</div><div class="sep"></div><div class="ar"></div></div><div class="go" style="top:520px"><svg width="36" height="36"><polyline points="15.2,9 24.3,18 15.2,27" fill="none" stroke="#fff" stroke-width="2.3"/></svg></div><div class="dd" style="top:574px;background:#eeeeee;border-top-color:#8a8a8a;border-left-color:#8a8a8a;border-right-color:#fafafa;border-bottom-color:#fafafa"><div style="position:absolute;left:22px;top:0px;font-size:24px;line-height:49px;white-space:nowrap;transform:scaleX(1.05);transform-origin:0 0;">Scalar</div><div class="sep"></div><div class="ar"></div></div><div class="go" style="top:582px"><svg width="36" height="36"><polyline points="15.2,9 24.3,18 15.2,27" fill="none" stroke="#fff" stroke-width="2.3"/></svg></div><div class="dd" style="top:686px;"><div style="position:absolute;left:22px;top:1px;font-size:24px;line-height:49px;white-space:nowrap;transform:scaleX(1.056);transform-origin:0 0;">TZ2P</div><div class="sep"></div><div class="ar"></div></div><div class="go" style="top:694px"><svg width="36" height="36"><polyline points="15.2,9 24.3,18 15.2,27" fill="none" stroke="#fff" stroke-width="2.3"/></svg></div><div class="dd" style="top:748px;"><div style="position:absolute;left:22px;top:0px;font-size:24px;line-height:49px;white-space:nowrap;transform:scaleX(1.05);transform-origin:0 0;">Small</div><div class="sep"></div><div class="ar"></div></div><div class="dd" style="top:810px;"><div style="position:absolute;left:22px;top:1px;font-size:24px;line-height:49px;white-space:nowrap;transform:scaleX(1.056);transform-origin:0 0;">Good</div><div class="sep"></div><div class="ar"></div></div><div class="go" style="top:818px"><svg width="36" height="36"><polyline points="15.2,9 24.3,18 15.2,27" fill="none" stroke="#fff" stroke-width="2.3"/></svg></div>
</div>
</body></html>
